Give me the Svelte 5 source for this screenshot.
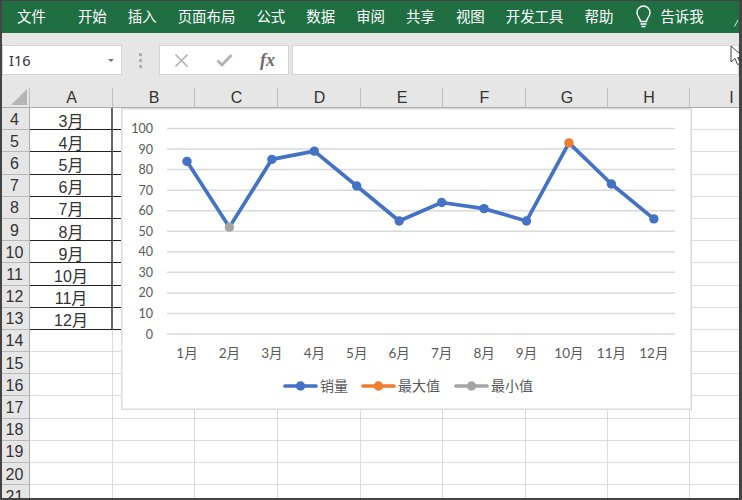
<script>
  const tabs = ['文件', '开始', '插入', '页面布局', '公式', '数据', '审阅', '共享', '视图', '开发工具', '帮助'];
  const columns = ['A', 'B', 'C', 'D', 'E', 'F', 'G', 'H', 'I'];
  const months = ['1月', '2月', '3月', '4月', '5月', '6月', '7月', '8月', '9月', '10月', '11月', '12月'];
  const sales = [84, 52, 85, 89, 72, 55, 64, 61, 55, 93, 73, 56];
  const rows = Array.from({ length: 18 }, (_, i) => i + 4);
  const ticks = [100, 90, 80, 70, 60, 50, 40, 30, 20, 10, 0];

  const yOf = (v) => 226 - v * 2.055;
  const xOf = (i) => 66 + i * 42.44;
  const points = sales.map((v, i) => ({ x: xOf(i), y: yOf(v), v }));
  const line = points.map((p) => `${p.x},${p.y}`).join(' ');
  const maxIdx = sales.indexOf(Math.max(...sales));
  const minIdx = sales.indexOf(Math.min(...sales));
  const monthAt = (row) => (row >= 4 && row <= 13 ? `${row - 1}月` : '');
  const legend = [
    { x: 164, tx: 199, label: '销量', color: '#4472c4' },
    { x: 242, tx: 277, label: '最大值', color: '#ed7d31' },
    { x: 335, tx: 370, label: '最小值', color: '#a5a5a5' }
  ];
</script>

<div class="window">
  <nav class="ribbon">
    {#each tabs as tab, i}
      <span class="tab" class:first={i === 0}>{tab}</span>
    {/each}
    <svg class="bulb" width="17" height="24" viewBox="0 0 17 24" aria-hidden="true">
      <path d="M5.5 16.5c0-3-3.5-4.5-3.500-9a6 6 0 0 1 13 0c0 4.500-3.500 6-3.500 9z" fill="none" stroke="#fff" stroke-width="1.400" />
      <path d="M5.500 19h6M6.500 21.500h4" stroke="#fff" stroke-width="1.500" />
    </svg>
    <span class="tab tell">告诉我</span>
    <svg class="collapse" width="5" height="8" viewBox="0 0 5 8" aria-hidden="true">
      <path d="M0.500 7.500 4 1" stroke="#dfe9e3" stroke-width="1" fill="none" />
    </svg>
  </nav>

  <div class="formula">
    <div class="namebox">
      <span>I16</span>
      <i class="caret"></i>
    </div>
    <div class="dots"><i></i><i></i><i></i></div>
    <div class="actions">
      <svg width="15" height="15" viewBox="0 0 15 15" aria-hidden="true">
        <path d="M1.500 1.500l12 12M13.500 1.500l-12 12" stroke="#b3b3b3" stroke-width="1.700" />
      </svg>
      <svg width="17" height="14" viewBox="0 0 17 14" aria-hidden="true">
        <path d="M1.500 7.500l4.500 4.500 9.500-10" stroke="#b3b3b3" stroke-width="2.800" fill="none" />
      </svg>
      <span class="fx">fx</span>
    </div>
    <div class="input"></div>
  </div>

  <div class="sheet">
    <div class="spacer"></div>
    <div class="corner">
      <svg width="16" height="16" viewBox="0 0 16 16" aria-hidden="true">
        <polygon points="16,0 16,16 0,16" fill="#b5b5b5" />
      </svg>
    </div>
    {#each columns as col}
      <div class="colhead">{col}</div>
    {/each}

    {#each rows as row}
      <div class="rowhead">{row}</div>
      {#each columns as col}
        <div
          class="cell"
          class:a={col === 'A' && row <= 13}
          class:ruled={(col === 'A' || col === 'B') && row <= 13}
        >{col === 'A' ? monthAt(row) : ''}</div>
      {/each}
    {/each}

    <div class="chart">
      <svg width="570" height="301" viewBox="0 0 570 301">
        {#each ticks as t}
          <line x1="46" x2="554" y1={yOf(t)} y2={yOf(t)} class="grid" />
          <text x="32" y={yOf(t) + 4.500} text-anchor="end" class="label">{t}</text>
        {/each}
        {#each months as m, i}
          <text x={xOf(i)} y="250" text-anchor="middle" class="label month">{m}</text>
        {/each}
        <polyline points={line} class="series" />
        {#each points as p, i}
          <circle
            cx={p.x}
            cy={p.y}
            r="4.700"
            fill={i === maxIdx ? '#ed7d31' : i === minIdx ? '#a5a5a5' : '#4472c4'}
          />
        {/each}
        {#each legend as item}
          <line x1={item.x} x2={item.x + 31} y1="278" y2="278" stroke={item.color} stroke-width="3.700" stroke-linecap="round" />
          <circle cx={item.x + 15.500} cy="278" r="4.700" fill={item.color} />
          <text x={item.tx} y="283" class="legend">{item.label}</text>
        {/each}
      </svg>
    </div>
  </div>

  <svg class="cursor" width="14" height="22" viewBox="0 0 14 22" aria-hidden="true">
    <path d="M1 1v16l4-3.500 2.500 6 2.800-1.200-2.500-5.800H14z" fill="#fff" stroke="#444" stroke-width="1" />
  </svg>
</div>

<style>
  :global(body) {
    margin: 0;
    background: #fff;
  }

  .window {
    position: relative;
    box-sizing: border-box;
    width: 742px;
    height: 500px;
    overflow: hidden;
    display: flex;
    flex-direction: column;
    border-style: solid;
    border-color: #444;
    border-width: 1px 3px 2px 2px;
    background: #e6e6e6;
    font-family: "Liberation Sans", "Noto Sans CJK SC", sans-serif;
  }

  .ribbon {
    position: relative;
    flex: none;
    height: 32px;
    display: flex;
    align-items: center;
    gap: 21px;
    padding: 0 0 2px 15px;
    box-sizing: border-box;
    background: #1f6f43;
    color: #fff;
    font-family: "Noto Sans CJK SC", sans-serif;
    font-size: 14.450px;
  }

  .tab {
    line-height: 20px;
    white-space: nowrap;
  }

  .tab.first {
    margin-right: 11px;
  }

  .bulb {
    flex: none;
    margin-left: 1px;
    margin-top: 2px;
  }

  .tell {
    margin-left: -13px;
  }

  .collapse {
    position: absolute;
    right: 0;
    top: 18px;
  }

  .formula {
    flex: none;
    height: 30px;
    margin-top: 12px;
    display: flex;
  }

  .namebox,
  .actions,
  .input {
    box-sizing: border-box;
    background: #fff;
    border: 1px solid #d4d4d4;
  }

  .namebox {
    width: 120px;
    display: flex;
    align-items: center;
    justify-content: space-between;
    padding: 0 7px 0 6px;
    font-family: "Noto Sans", sans-serif;
    font-size: 14.500px;
    color: #333;
  }

  .caret {
    width: 0;
    height: 0;
    border-left: 3px solid transparent;
    border-right: 3px solid transparent;
    border-top: 3px solid #777;
  }

  .dots {
    width: 37px;
    display: flex;
    flex-direction: column;
    align-items: center;
    justify-content: center;
    gap: 3px;
  }

  .dots i {
    width: 3px;
    height: 3px;
    background: #b0b0b0;
  }

  .actions {
    width: 130px;
    display: flex;
    align-items: center;
    gap: 27px;
    padding-left: 14px;
  }

  .fx {
    font-family: "Liberation Serif", serif;
    font-style: italic;
    font-weight: 700;
    font-size: 18px;
    color: #6b6b6b;
  }

  .input {
    flex: 1;
    margin-left: 3px;
  }

  .sheet {
    position: relative;
    flex: 1;
    min-height: 0;
    overflow: hidden;
    display: grid;
    grid-template-columns: 28px 83px 82px 83px 83px 82px 83px 82px 82px 83px;
    grid-template-rows: 13px 20px;
    grid-auto-rows: 22.200px;
  }

  .spacer {
    grid-column: 1 / -1;
  }

  .corner {
    display: flex;
    align-items: flex-end;
    justify-content: flex-end;
    padding: 0 2px 2px 0;
    border-right: 1px solid #bdbdbd;
    border-bottom: 1px solid #ababab;
    box-sizing: border-box;
  }

  .colhead {
    box-sizing: border-box;
    display: flex;
    align-items: center;
    justify-content: center;
    padding: 1px 0 0 1px;
    border-right: 1px solid #bdbdbd;
    border-bottom: 1px solid #ababab;
    font-size: 16px;
    color: #333;
  }

  .rowhead {
    box-sizing: border-box;
    display: flex;
    align-items: center;
    justify-content: center;
    padding: 2px 2px 0 0;
    background: #e6e6e6;
    border-bottom: 1px solid #b8b8b8;
    border-right: 1px solid #ababab;
    font-size: 16px;
    color: #333;
  }

  .cell {
    box-sizing: border-box;
    display: flex;
    align-items: center;
    justify-content: center;
    padding: 2px 0 0 1px;
    background: #fff;
    border-right: 1px solid #dcdcdc;
    border-bottom: 1px solid #dcdcdc;
    font-size: 16px;
    color: #333;
  }

  .cell.ruled {
    border-bottom-color: #222;
  }

  .cell.a {
    border-right: 2px solid #666;
  }

  .chart {
    position: absolute;
    left: 119px;
    top: 33px;
    width: 571px;
    height: 302px;
    background: #fff;
    box-shadow: inset 0 0 0 1.500px #dcdcdc;
  }

  .chart svg {
    display: block;
  }

  .grid {
    stroke: #d9d9d9;
    stroke-width: 1.500;
  }

  .label {
    font-family: Lato, "Noto Sans CJK SC", sans-serif;
    font-size: 12.500px;
    fill: #595959;
  }

  .month {
    font-size: 13.500px;
  }

  .legend {
    font-family: "Noto Sans CJK SC", sans-serif;
    font-size: 14px;
    fill: #595959;
  }

  .series {
    fill: none;
    stroke: #4472c4;
    stroke-width: 3.700;
    stroke-linejoin: round;
    stroke-linecap: round;
  }

  .cursor {
    position: absolute;
    left: 728px;
    top: 44px;
  }
</style>
